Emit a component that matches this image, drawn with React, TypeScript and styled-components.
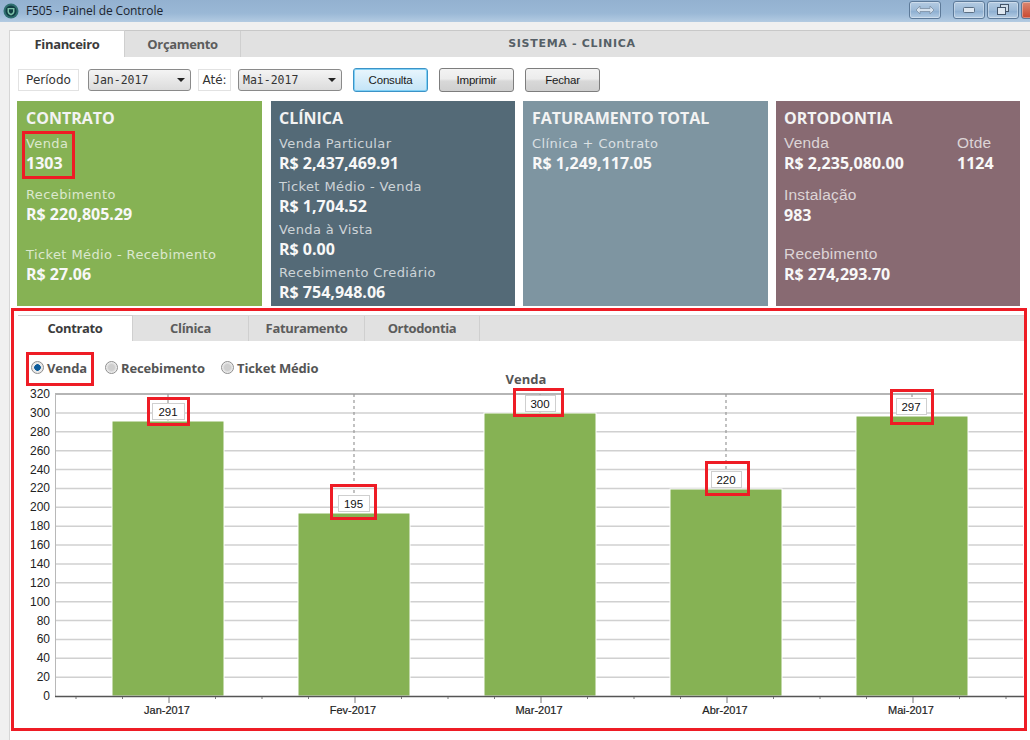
import React from 'react';
import styled, { createGlobalStyle, css } from 'styled-components';

const Global = createGlobalStyle`
  html, body { margin: 0; padding: 0; background: #f0f0f0; overflow: hidden; }
  * { box-sizing: border-box; }
`;

const Page = styled.div`
  width: 1030px; height: 740px; display: flex; flex-direction: column;
  background: #f0f0f0; overflow: hidden; position: relative;
  font-family: "Open Sans", "Liberation Sans", sans-serif;
`;
const TitleBar = styled.header`
  height: 22px; flex: none; display: flex; align-items: center; padding-left: 3px;
  background: linear-gradient(#93b1d0 0%, #9ab8d6 60%, #b3cbe2 100%);
`;
const TitleText = styled.span`
  font: 12px/18px "Open Sans", sans-serif; color: #1c2530; margin: -1px 0 0 7px; letter-spacing: -.1px;
`;
const WindowButtons = styled.div`
  margin-left: auto; display: flex; height: 18px; margin-top: -3px; margin-right: -11px; flex: none;
`;
const WinButton = styled.div<{ $w: number; $ml?: number; $close?: boolean }>`
  width: ${p => p.$w}px; margin-left: ${p => p.$ml ?? 0}px; height: 18px; flex: none;
  border: 1px solid #5d7a99; border-radius: 3px; display: flex; align-items: center; justify-content: center;
  background: ${p => p.$close
    ? 'linear-gradient(#d98873, #c9472e)'
    : 'linear-gradient(#b4cbe2 0%, #9dbad7 50%, #8fb0d2 60%, #b5cde4 100%)'};
  box-shadow: inset 0 0 0 1px rgba(255,255,255,.35);
`;
const Shell = styled.main`
  margin: 8px 0 0 9px; flex: 1; background: #fff; display: flex; flex-direction: column; border-left: 1px solid #d6d6d6;
`;
const TabRow = styled.nav`
  display: flex; height: 27px; flex: none; background: #e1e1e1; border-top: 1px solid #c8c8c8;
`;
const Tab = styled.div<{ $active?: boolean; $w: number }>`
  width: ${p => p.$w}px; display: flex; align-items: center; justify-content: center;
  font: 700 13px "Open Sans", sans-serif; color: #5c5c5c; letter-spacing: -.35px; padding-bottom: 1px;
  border-right: 1px solid #cfcfcf;
  ${p => p.$active && css`background: #fff; color: #3c3c3c; margin-top: -1px; border-top: 1px solid #d0d0d0; height: calc(100% + 1px);`}
`;
const SystemName = styled.div`
  flex: 1; text-align: center; font: 700 11px/26px "DejaVu Sans", sans-serif; color: #555f66; padding-right: 127px; letter-spacing: .7px;
`;
const Toolbar = styled.div`
  display: flex; align-items: center; height: 38px; flex: none; padding: 8px 0 0 8px;
`;
const FieldBox = styled.div<{ $w: number; $ml: number }>`
  width: ${p => p.$w}px; margin-left: ${p => p.$ml}px; height: 22px; border: 1px solid #e2e2e2; background: #fff;
  font: 12px/20px "DejaVu Sans", sans-serif; color: #333; text-align: center;
`;
const Select = styled.div<{ $w: number; $ml: number }>`
  width: ${p => p.$w}px; margin-left: ${p => p.$ml}px; height: 22px; border: 1px solid #8a8a8a; border-radius: 3px;
  background: linear-gradient(#f4f4f4, #dcdcdc); display: flex; align-items: center; justify-content: space-between;
  padding: 0 5px 0 4px; font: 11.5px "DejaVu Sans Mono", monospace; color: #333;
`;
const Caret = styled.span`
  width: 0; height: 0; border-left: 4px solid transparent; border-right: 4px solid transparent; border-top: 4px solid #222;
`;
const Button = styled.div<{ $ml: number; $primary?: boolean }>`
  width: 75px; margin-left: ${p => p.$ml}px; height: 24px; border-radius: 3px; border: 1px solid #7d7d7d;
  background: linear-gradient(#f3f3f3 0%, #ececec 45%, #d8d8d8 55%, #cfcfcf 100%);
  font: 11.5px/22px "Liberation Sans", sans-serif; color: #1a1a1a; text-align: center; letter-spacing: -.2px;
  ${p => p.$primary && css`
    border: 1px solid #3c93c7; background: linear-gradient(#e9f6fd, #c3e4f7);
    box-shadow: inset 0 0 0 1px #7fd0f5;
  `}
`;
const Cards = styled.section`
  display: flex; gap: 8px; padding: 6px 0 0 7px; height: 211px; flex: none;
`;
const Card = styled.article<{ $bg: string; $w: number; $pl: number; $mr?: number }>`
  width: ${p => p.$w}px; height: 205px; background: ${p => p.$bg}; padding: 7px 0 0 ${p => p.$pl}px;
  margin-right: ${p => p.$mr ?? 0}px; position: relative; color: #fff;
`;
const CardTitle = styled.h2`
  margin: 0 0 6px; font: 700 16px/20px "Open Sans", sans-serif; color: #f3f3f3;
`;
const Field = styled.div<{ $mt?: number }>`
  margin-top: ${p => p.$mt ?? 0}px; padding-top: 1px;
`;
const FieldLabel = styled.div<{ $alt?: boolean }>`
  color: rgba(255,255,255,.72);
  ${p => p.$alt
    ? 'font: 15.5px/16px "Liberation Sans", sans-serif; letter-spacing: .2px; margin-bottom: 2px;'
    : 'font: 13px/18px "DejaVu Sans", sans-serif; letter-spacing: .4px;'}
`;
const FieldValue = styled.div`
  font: 700 16px/20px "Open Sans", sans-serif; color: #f8f8f8;
`;
const Columns = styled.div`
  display: grid; grid-template-columns: 173px auto; justify-content: start;
`;
const RedBox = styled.div<{ $l: number; $t: number; $w: number; $h: number }>`
  position: absolute; left: ${p => p.$l}px; top: ${p => p.$t}px; width: ${p => p.$w}px; height: ${p => p.$h}px;
  border: 3px solid #ee1c25; pointer-events: none;
`;
const ChartPanel = styled.section`
  position: absolute; left: 11px; top: 308px; width: 1016px; height: 423px;
  border: 3px solid #ee1c25; padding: 4px 0 0 4px; background: #fff; display: flex; flex-direction: column;
`;
const SubTabRow = styled(TabRow)`
  height: 26px; border-top: 1px solid #d8d8d8;
`;
const Radios = styled.div`
  display: flex; align-items: center; height: 27px; margin: 13px 0 0 13px; position: relative;
`;
const RadioItem = styled.label<{ $w: number }>`
  width: ${p => p.$w}px; display: flex; align-items: center; gap: 3px;
  font: 700 13px "Open Sans", sans-serif; color: #555; letter-spacing: -.15px;
`;
const RadioDot = styled.span<{ $on?: boolean }>`
  width: 13px; height: 13px; border-radius: 50%; border: 1px solid #8e8e8e; flex: none;
  background: ${p => p.$on
    ? 'radial-gradient(circle, #0d5c9c 0 3px, #e9e9e9 3.6px)'
    : 'radial-gradient(circle, #cfcfcf 0 3px, #f2f2f2 5.500px)'};
`;
const Chart = styled.svg`
  display: block; position: absolute; left: 0; top: 0; pointer-events: none;
`;

const bars = [
  { name: 'Jan-2017', v: 291, x: 112, top: 421, lx: 152, ly: 403, w: 32 },
  { name: 'Fev-2017', v: 195, x: 298, top: 513, lx: 338, ly: 495, w: 31 },
  { name: 'Mar-2017', v: 300, x: 484, top: 413, lx: 525, ly: 395, w: 30 },
  { name: 'Abr-2017', v: 220, x: 670, top: 489, lx: 711, ly: 471, w: 30 },
  { name: 'Mai-2017', v: 297, x: 856, top: 416, lx: 896, ly: 398, w: 30 },
];
const ticks = Array.from({ length: 17 }, (_, i) => i * 20);
const yOf = (v: number) => 696 - (v * 302) / 320;

const redBoxes = [
  [147, 397, 43, 29], [330, 484, 47, 36], [513, 388, 51, 29], [705, 461, 45, 35], [890, 389, 44, 36],
];

const ChartDrawing = () => (
  <Chart width={1030} height={740} viewBox="0 0 1030 740">
    {ticks.filter(t => t > 0).map(t => (
      <line key={t} x1={55} x2={1023} y1={yOf(t)} y2={yOf(t)} stroke={t === 320 ? '#b5b5b5' : '#d0d0d0'} strokeWidth={t === 320 ? 2 : 1.5} />
    ))}
    <line x1={55.5} x2={55.5} y1={394} y2={696} stroke="#b8b8b8" />
    {bars.map(b => (
      <line key={b.name} x1={b.x + 56} x2={b.x + 56} y1={394} y2={b.top} stroke="#999" strokeWidth={1.2} strokeDasharray="3 3" />
    ))}
    {bars.map(b => (
      <rect key={b.name} x={b.x} y={b.top} width={112} height={696 - b.top} fill="#86b254" stroke="#fff" strokeWidth={1} />
    ))}
    <line x1={55} x2={1024} y1={696.5} y2={696.5} stroke="#555" strokeWidth={1.5} />
    {Array.from({ length: 21 }, (_, i) => 76 + i * 46.5).filter(x => x < 1022).map((x, i) => (
      <line key={x} x1={x} x2={x} y1={697} y2={(i - 2) % 4 === 0 ? 703 : 699} stroke="#777" />
    ))}
    {ticks.map(t => (
      <text key={t} x={50} y={yOf(t) + 4} textAnchor="end" fontFamily="Liberation Sans" fontSize={12} fill="#222">{t}</text>
    ))}
    {bars.map(b => (
      <text key={b.name} x={b.x + 55} y={713.5} textAnchor="middle" fontFamily="Liberation Sans" fontSize={11} fill="#222" stroke="#222" strokeWidth={0.2}>{b.name}</text>
    ))}
    <text x={526} y={384} textAnchor="middle" fontFamily="Open Sans" fontWeight={700} fontSize={13} fill="#555">Venda</text>
    {bars.map(b => (
      <g key={b.name}>
        <rect x={b.lx + 0.5} y={b.ly + 0.5} width={b.w} height={16} fill="#fff" stroke="#cfcfcf" />
        <text x={b.lx + b.w / 2} y={b.ly + 12.5} textAnchor="middle" fontFamily="Liberation Sans" fontSize={11.5} fill="#111">{b.v}</text>
      </g>
    ))}
    {redBoxes.map(([x, y, w, h]) => (
      <rect key={x} x={x + 1.5} y={y + 1.5} width={w - 3} height={h - 3} fill="none" stroke="#ee1c25" strokeWidth={3} />
    ))}
  </Chart>
);

const F = ({ label, value, mt, alt }: { label: string; value: string; mt?: number; alt?: boolean }) => (
  <Field $mt={mt}>
    <FieldLabel $alt={alt}>{label}</FieldLabel>
    <FieldValue>{value}</FieldValue>
  </Field>
);

export default function App() {
  return (
    <Page>
      <Global />
      <TitleBar>
        <svg width="16" height="16" viewBox="0 0 16 16">
          <circle cx="8" cy="8" r="7.5" fill="#2f6f70" />
          <circle cx="8" cy="8" r="5.5" fill="#123f45" />
          <path d="M4.5 5h7v3.5c0 2-1.6 3.2-3.5 4-1.9-.8-3.5-2-3.5-4z" fill="#7cc0a8" />
          <path d="M6 6.2h4v2.3c0 1-.9 1.8-2 2.3-1.1-.5-2-1.3-2-2.3z" fill="#123f45" />
        </svg>
        <TitleText>F505 - Painel de Controle</TitleText>
        <WindowButtons>
          <WinButton $w={32}>
            <svg width="20" height="10" viewBox="0 0 20 10"><path d="M1 5l4-4v2.5h10V1l4 4-4 4V6.500H5V9z" fill="#d6e2ee" stroke="#7c8fa3" strokeWidth=".8" /></svg>
          </WinButton>
          <WinButton $w={32} $ml={12}>
            <svg width="12" height="6" viewBox="0 0 12 6"><rect x=".5" y=".5" width="11" height="5" rx="1" fill="#dfe8f1" stroke="#5b6f84" /></svg>
          </WinButton>
          <WinButton $w={32} $ml={2}>
            <svg width="14" height="12" viewBox="0 0 14 12"><rect x="4.500" y=".5" width="8" height="7" fill="#cfdce9" stroke="#44556a" /><rect x="1.500" y="3.500" width="8" height="7" fill="#dfe8f1" stroke="#44556a" /></svg>
          </WinButton>
          <WinButton $w={20} $ml={2} $close />
        </WindowButtons>
      </TitleBar>
      <Shell>
        <TabRow>
          <Tab $active $w={115}>Financeiro</Tab>
          <Tab $w={116}>Orçamento</Tab>
          <SystemName>SISTEMA - CLINICA</SystemName>
        </TabRow>
        <Toolbar>
          <FieldBox $w={61} $ml={0}>Período</FieldBox>
          <Select $w={103} $ml={9}>Jan-2017<Caret /></Select>
          <FieldBox $w={33} $ml={7}>Até:</FieldBox>
          <Select $w={104} $ml={7}>Mai-2017<Caret /></Select>
          <Button $ml={11} $primary>Consulta</Button>
          <Button $ml={11}>Imprimir</Button>
          <Button $ml={11}>Fechar</Button>
        </Toolbar>
        <Cards>
          <Card $bg="#86b254" $w={245} $pl={9} $mr={1}>
            <CardTitle>CONTRATO</CardTitle>
            <F label="Venda" value="1303" />
            <F label="Recebimento" value="R$ 220,805.29" mt={12} />
            <F label="Ticket Médio - Recebimento" value="R$ 27.06" mt={21} />
            <RedBox $l={5} $t={30} $w={53} $h={48} />
          </Card>
          <Card $bg="#546a77" $w={244} $pl={8}>
            <CardTitle>CLÍNICA</CardTitle>
            <F label="Venda Particular" value="R$ 2,437,469.91" />
            <F label="Ticket Médio - Venda" value="R$ 1,704.52" mt={4} />
            <F label="Venda à Vista" value="R$ 0.00" mt={4} />
            <F label="Recebimento Crediário" value="R$ 754,948.06" mt={4} />
          </Card>
          <Card $bg="#7e95a1" $w={245} $pl={9}>
            <CardTitle>FATURAMENTO TOTAL</CardTitle>
            <F label="Clínica + Contrato" value="R$ 1,249,117.05" />
          </Card>
          <Card $bg="#886a72" $w={244} $pl={8}>
            <CardTitle>ORTODONTIA</CardTitle>
            <Columns>
              <F alt label="Venda" value="R$ 2,235,080.00" />
              <F alt label="Otde" value="1124" />
            </Columns>
            <F alt label="Instalação" value="983" mt={13} />
            <F alt label="Recebimento" value="R$ 274,293.70" mt={20} />
          </Card>
        </Cards>
      </Shell>
      <ChartPanel>
        <SubTabRow>
          <Tab $active $w={115}>Contrato</Tab>
          <Tab $w={116}>Clínica</Tab>
          <Tab $w={116}>Faturamento</Tab>
          <Tab $w={115}>Ortodontia</Tab>
        </SubTabRow>
        <Radios>
          <RadioItem $w={74}><RadioDot $on />Venda</RadioItem>
          <RadioItem $w={116}><RadioDot />Recebimento</RadioItem>
          <RadioItem $w={120}><RadioDot />Ticket Médio</RadioItem>
        </Radios>
      </ChartPanel>
      <RedBox $l={26} $t={352} $w={68} $h={34} />
      <ChartDrawing />
    </Page>
  );
}
